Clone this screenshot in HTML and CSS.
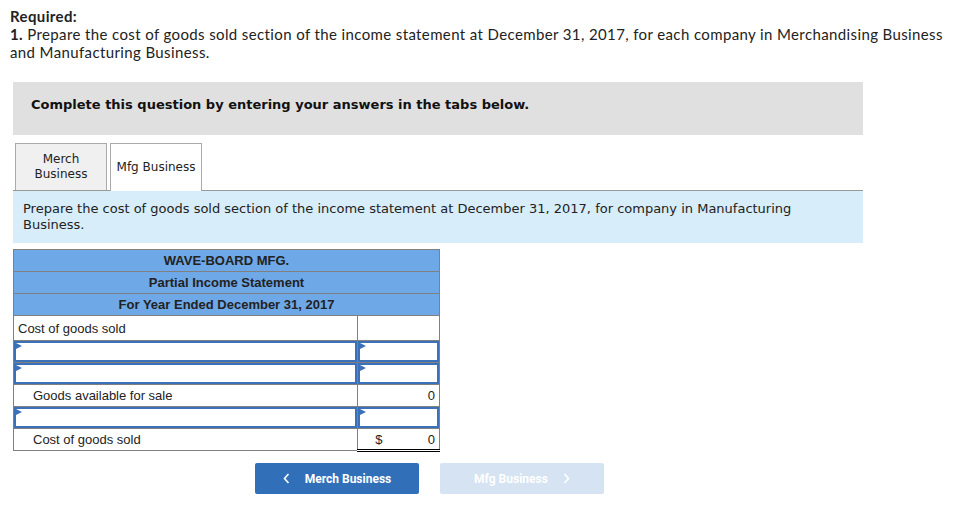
FILE: index.html
```html
<!DOCTYPE html>
<html>
<head>
<meta charset="utf-8">
<link rel="stylesheet" href="styles.css">
</head>
<body>
<div class="page">
  <div class="required">
    <div class="req-title">Required:</div>
    <div class="req-text"><b>1.</b> Prepare the cost of goods sold section of the income statement at December 31, 2017, for each company in Merchandising Business and Manufacturing Business.</div>
  </div>

  <div class="complete-box">Complete this question by entering your answers in the tabs below.</div>

  <div class="tabs">
    <div class="tab">Merch<br>Business</div>
    <div class="tab active">Mfg Business</div>
  </div>

  <div class="instructions">Prepare the cost of goods sold section of the income statement at December 31, 2017, for company in Manufacturing Business.</div>

  <table class="stmt">
    <colgroup><col class="c1"><col class="c2"></colgroup>
    <tr class="hdr"><td colspan="2">WAVE-BOARD MFG.</td></tr>
    <tr class="hdr"><td colspan="2">Partial Income Statement</td></tr>
    <tr class="hdr"><td colspan="2">For Year Ended December 31, 2017</td></tr>
    <tr class="row first"><td class="lbl">Cost of goods sold</td><td></td></tr>
    <tr class="row"><td class="inp"><div class="box"></div></td><td class="inp"><div class="box"></div></td></tr>
    <tr class="row"><td class="inp"><div class="box"></div></td><td class="inp"><div class="box"></div></td></tr>
    <tr class="row"><td class="lbl indent">Goods available for sale</td><td class="amt topline">0</td></tr>
    <tr class="row"><td class="inp"><div class="box"></div></td><td class="inp"><div class="box"></div></td></tr>
    <tr class="row"><td class="lbl indent">Cost of goods sold</td><td class="amt dbl"><span class="dollar">$</span><span>0</span></td></tr>
  </table>

  <div class="nav">
    <div class="btn prev"><svg class="chev" width="7" height="11" viewBox="0 0 7 11"><polyline points="5.5,1 1.5,5.5 5.5,10" fill="none" stroke="#fff" stroke-width="1.6"/></svg><span>Merch Business</span></div>
    <div class="btn next"><span>Mfg Business</span><svg class="chev" width="7" height="11" viewBox="0 0 7 11"><polyline points="1.5,1 5.5,5.5 1.5,10" fill="none" stroke="#fff" stroke-width="1.6"/></svg></div>
  </div>
</div>
</body>
</html>
```

FILE: styles.css
```css
* { box-sizing: border-box; }
body { margin: 0; background: #fff; }
.page { padding: 7px 10px 0 10px; }

.required { font-family: "Lato", "Liberation Sans", sans-serif; font-size: 15px; letter-spacing: 0.38px; line-height: 18px; color: #222; }
.req-title { font-weight: bold; }
.req-text { width: 950px; }

.complete-box {
  margin: 21px 0 0 3px;
  width: 850px;
  height: 53px;
  background: #e0e0e0;
  padding: 15px 0 0 18px;
  font-family: "DejaVu Sans", Verdana, sans-serif;
  font-weight: bold;
  font-size: 13px;
  color: #111;
}

.tabs {
  margin: 8px 0 0 3px;
  width: 850px;
  display: flex;
  gap: 3px;
  padding-left: 2px;
  border-bottom: 1px solid #999;
  height: 48px;
  align-items: flex-start;
}
.tab {
  width: 92px;
  height: 47px;
  border: 1px solid #aaa;
  border-bottom: none;
  background: #f0f0f0;
  font-family: "DejaVu Sans", Verdana, sans-serif;
  font-size: 12px;
  line-height: 15px;
  color: #222;
  display: flex;
  align-items: center;
  justify-content: center;
  text-align: center;
}
.tab.active { background: #fff; height: 48px; position: relative; z-index: 1; }

.instructions {
  margin-left: 3px;
  width: 850px;
  height: 52px;
  background: #d7edf9;
  padding: 10px 10px 0 10px;
  font-family: "DejaVu Sans", Verdana, sans-serif;
  font-size: 13px;
  line-height: 16px;
  color: #222;
}

.stmt {
  margin: 6px 0 0 3px;
  width: 427px;
  border-collapse: collapse;
  font-family: "Liberation Sans", Arial, sans-serif;
  font-size: 13px;
  color: #222;
}
.stmt col.c1 { width: 345px; }
.stmt col.c2 { width: 82px; }
.stmt td { border: 1px solid #808080; padding: 0 4px; height: 22px; }
.stmt tr.hdr td { background: #6fa8e6; text-align: center; font-weight: bold; height: 22px; }
.stmt tr.first td { height: 25px; }
.stmt td.indent { padding-left: 19px; }
.stmt td.amt { text-align: right; }
.stmt td.topline { border-top: 1px solid #000; }
.stmt td.dbl { border-bottom: 3px double #000; }
.dollar { float: left; padding-left: 13px; }
.stmt td.inp { padding: 0; position: relative; }
.box { height: 21px; border: 2px solid #3b71b8; margin: 0; }
.stmt td.inp::before {
  content: "";
  position: absolute;
  left: 2px; top: 2px;
  border-left: 6px solid #3b71b8;
  border-top: 3px solid transparent;
  border-bottom: 3px solid transparent;
}

.nav { display: flex; gap: 21px; margin: 11px 0 0 245px; }
.btn {
  width: 164px;
  height: 31px;
  border-radius: 2px;
  font-family: "Roboto", "Liberation Sans", sans-serif;
  font-weight: bold;
  font-size: 12px;
  color: #fff;
  display: flex;
  align-items: center;
  justify-content: center;
  gap: 15px;
}
.btn.prev { background: #3170b9; }
.btn.next { background: #d5e3f3; }
.chev { display: block; }
```
